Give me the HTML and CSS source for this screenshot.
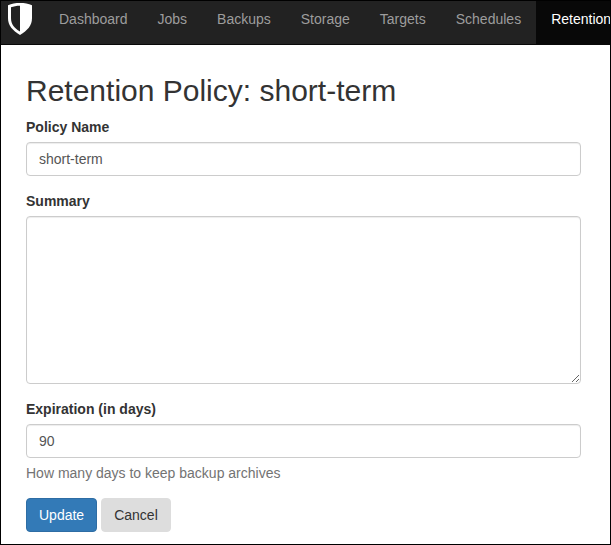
FILE: index.html
```html
<!DOCTYPE html>
<html lang="en">
<head>
<meta charset="utf-8">
<title>Retention Policy</title>
<link rel="stylesheet" href="styles.css">
</head>
<body>
<div class="frame">
  <nav class="navbar">
    <a class="brand" href="#">
      <svg width="26" height="34" viewBox="0 0 26 34"><path fill="#fff" d="M13 1C8.500 1 4.500 1.600 1 3.200V16C1 23.500 5.500 28.500 13 33C20.500 28.500 25 23.500 25 16V3.200C21.500 1.600 17.500 1 13 1Z"/><path fill="#222" d="M13 3.700C9.500 3.700 6.500 4.200 4 5.300V16C4 22 7 26 13 29.600Z"/></svg>
    </a>
    <a class="item" href="#">Dashboard</a>
    <a class="item" href="#">Jobs</a>
    <a class="item" href="#">Backups</a>
    <a class="item" href="#">Storage</a>
    <a class="item" href="#">Targets</a>
    <a class="item" href="#">Schedules</a>
    <a class="item active" href="#">Retention</a>
  </nav>
  <form class="content">
    <h1>Retention Policy: short-term</h1>
    <div class="group">
      <label for="name">Policy Name</label>
      <input class="control" id="name" type="text" value="short-term">
    </div>
    <div class="group">
      <label for="summary">Summary</label>
      <textarea class="control summary" id="summary"></textarea>
    </div>
    <div class="group">
      <label for="days">Expiration (in days)</label>
      <input class="control" id="days" type="text" value="90">
      <p class="help">How many days to keep backup archives</p>
    </div>
    <div class="actions">
      <button class="btn primary" type="button">Update</button>
      <button class="btn" type="button">Cancel</button>
    </div>
  </form>
</div>
</body>
</html>
```
FILE: styles.css
```css
* { box-sizing: border-box; }
body {
  margin: 0;
  background: #fff;
  color: #333;
  font: 14px/20px "Liberation Sans", Arial, sans-serif;
}
.frame {
  height: 545px;
  border: 1px solid #000;
  overflow: hidden;
}
.navbar {
  display: flex;
  height: 44px;
  background: #222;
  border-bottom: 1px solid #080808;
  overflow: hidden;
}
.brand {
  flex: none;
  width: 43px;
  padding: 1px 0 0 6px;
}
.brand svg { display: block; }
.item {
  flex: none;
  padding: 8px 15px 15px;
  color: #9d9d9d;
  text-decoration: none;
}
.item.active {
  background: #080808;
  color: #fff;
}
.content { padding: 29px 29px 0 25px; }
h1 {
  margin: 0 0 10px;
  font-size: 30px;
  line-height: 33px;
  font-weight: 400;
}
.group { margin-bottom: 15px; }
label {
  display: block;
  margin-bottom: 5px;
  font-weight: 700;
}
.control {
  display: block;
  width: 100%;
  height: 34px;
  padding: 6px 12px;
  border: 1px solid #ccc;
  border-radius: 4px;
  background: #fff;
  box-shadow: inset 0 1px 1px rgba(0, 0, 0, .075);
  color: #555;
  font: inherit;
}
.summary { height: 168px; }
.help {
  margin: 5px 0 0;
  color: #737373;
}
.actions {
  display: flex;
  gap: 4px;
}
.btn {
  height: 34px;
  padding: 6px 12px;
  border: 1px solid #ddd;
  border-radius: 4px;
  background: #ddd;
  color: #333;
  font: inherit;
}
.primary {
  border-color: #2e6da4;
  background: #337ab7;
  color: #fff;
}
```
